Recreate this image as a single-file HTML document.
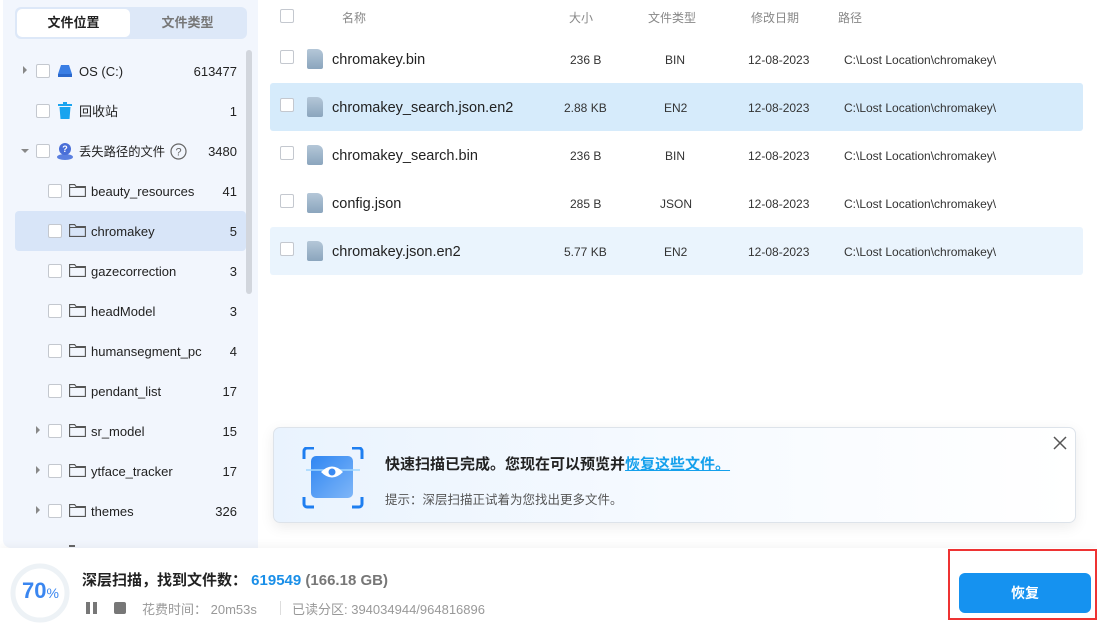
<!DOCTYPE html>
<html><head><meta charset="utf-8">
<style>
*{margin:0;padding:0;box-sizing:border-box}
body{width:1097px;height:624px;overflow:hidden;background:#fff;font-family:"Liberation Sans","Noto Sans CJK SC",sans-serif;color:#222;position:relative}
.abs{position:absolute}
#left{left:3px;top:0;width:255px;height:548px;background:#f2f6fd;border-radius:0 0 0 8px}
.tabs{left:15px;top:7px;width:232px;height:32px;background:#dde8f8;border-radius:6px}
.tab1{left:2px;top:2px;width:113px;height:28px;background:#fff;border-radius:5px;font-weight:bold;font-size:13px;text-align:center;line-height:28px}
.tab2{left:115px;top:2px;width:115px;height:28px;font-weight:bold;font-size:13px;text-align:center;line-height:28px;color:#777}
.row{position:absolute;left:0;width:255px;height:40px;font-size:13px}
.cb{position:absolute;width:14px;height:14px;border:1px solid #c4c8cf;border-radius:2px;background:#fff;top:13px}
.arr{position:absolute;top:15px;width:0;height:0;border-top:4px solid transparent;border-bottom:4px solid transparent;border-left:4px solid #888}
.arrd{position:absolute;top:18px;width:0;height:0;border-left:4px solid transparent;border-right:4px solid transparent;border-top:4px solid #888}
.lbl{position:absolute;top:1px;line-height:40px}
.cnt{position:absolute;right:18px;top:1px;line-height:40px}
.fold{position:absolute;top:12px;width:17px;height:14px}
.hdr{font-size:12px;color:#888;top:9px}
.frow{position:absolute;left:270px;width:813px;height:48px;font-size:14px;border-radius:3px}
.frow .cb{left:10px;top:15px}
.fi{position:absolute;left:37px;top:14px;width:16px;height:20px;background:linear-gradient(180deg,#b4c7d8,#8ba5bd);border-radius:2px 6px 2px 2px}
.fn{position:absolute;left:62px;top:1px;line-height:48px;font-size:14.5px}
.c{position:absolute;top:1px;line-height:48px;font-size:12px;color:#333}
</style></head><body>
<div id="left" class="abs"></div>
<div class="abs tabs"><div class="abs tab1">文件位置</div><div class="abs tab2">文件类型</div></div>
<div class="abs" style="left:246px;top:50px;width:6px;height:244px;background:#d2d6dd;border-radius:3px"></div>
<div class="abs" style="left:15px;top:211px;width:231px;height:40px;background:#d8e5f8;border-radius:4px"></div>
<div class="abs" style="left:69px;top:545px;width:6px;height:2px;background:#666"></div>

<div class="row" style="top:51px"><div class="arr" style="left:23px"></div><div class="cb" style="left:36px"></div>
<svg class="abs" style="left:57px;top:12px" width="16" height="16"><path d="M4 2h8l3 9v3H1v-3z" fill="#3a7ee4"/><rect x="1" y="11" width="14" height="3" fill="#2a68cc"/></svg>
<div class="lbl" style="left:79px">OS (C:)</div><div class="cnt">613477</div></div>

<div class="row" style="top:91px"><div class="cb" style="left:36px"></div>
<svg class="abs" style="left:57px;top:11px" width="16" height="18"><rect x="1" y="2" width="14" height="2" fill="#1aa4ef"/><rect x="6" y="0" width="4" height="2" fill="#1aa4ef"/><path d="M2.5 5h11l-1 12h-9z" fill="#1aa4ef"/></svg>
<div class="lbl" style="left:79px">回收站</div><div class="cnt">1</div></div>

<div class="row" style="top:131px"><div class="arrd" style="left:21px"></div><div class="cb" style="left:36px"></div>
<svg class="abs" style="left:56px;top:11px" width="18" height="18"><ellipse cx="9" cy="15" rx="8" ry="3" fill="#5a7fe0"/><circle cx="9" cy="7" r="6" fill="#4a6fd8"/><path d="M9 13l-3-2h6z" fill="#4a6fd8"/><text x="9" y="10" font-size="9" fill="#fff" text-anchor="middle" font-weight="bold" font-family="Liberation Sans">?</text></svg>
<div class="lbl" style="left:79px;font-size:12.3px">丢失路径的文件</div>
<svg class="abs" style="left:170px;top:12px" width="17" height="17"><circle cx="8.5" cy="8.5" r="7.5" fill="none" stroke="#666" stroke-width="1.2"/><text x="8.5" y="12.5" font-size="11" fill="#666" text-anchor="middle" font-family="Liberation Sans">?</text></svg>
<div class="cnt">3480</div></div>

<div class="row" style="top:171px"><div class="cb" style="left:48px"></div><svg class="fold" style="left:69px"><path d="M0.6 1.6h5l1.5 2h9.3v9.8H0.6z M0.6 4.5h16.3" fill="none" stroke="#555" stroke-width="1.1"/></svg><div class="lbl" style="left:91px">beauty_resources</div><div class="cnt">41</div></div>
<div class="row" style="top:211px"><div class="cb" style="left:48px"></div><svg class="fold" style="left:69px"><path d="M0.6 1.6h5l1.5 2h9.3v9.8H0.6z M0.6 4.5h16.3" fill="none" stroke="#555" stroke-width="1.1"/></svg><div class="lbl" style="left:91px">chromakey</div><div class="cnt">5</div></div>
<div class="row" style="top:251px"><div class="cb" style="left:48px"></div><svg class="fold" style="left:69px"><path d="M0.6 1.6h5l1.5 2h9.3v9.8H0.6z M0.6 4.5h16.3" fill="none" stroke="#555" stroke-width="1.1"/></svg><div class="lbl" style="left:91px">gazecorrection</div><div class="cnt">3</div></div>
<div class="row" style="top:291px"><div class="cb" style="left:48px"></div><svg class="fold" style="left:69px"><path d="M0.6 1.6h5l1.5 2h9.3v9.8H0.6z M0.6 4.5h16.3" fill="none" stroke="#555" stroke-width="1.1"/></svg><div class="lbl" style="left:91px">headModel</div><div class="cnt">3</div></div>
<div class="row" style="top:331px"><div class="cb" style="left:48px"></div><svg class="fold" style="left:69px"><path d="M0.6 1.6h5l1.5 2h9.3v9.8H0.6z M0.6 4.5h16.3" fill="none" stroke="#555" stroke-width="1.1"/></svg><div class="lbl" style="left:91px">humansegment_pc</div><div class="cnt">4</div></div>
<div class="row" style="top:371px"><div class="cb" style="left:48px"></div><svg class="fold" style="left:69px"><path d="M0.6 1.6h5l1.5 2h9.3v9.8H0.6z M0.6 4.5h16.3" fill="none" stroke="#555" stroke-width="1.1"/></svg><div class="lbl" style="left:91px">pendant_list</div><div class="cnt">17</div></div>
<div class="row" style="top:411px"><div class="arr" style="left:36px"></div><div class="cb" style="left:48px"></div><svg class="fold" style="left:69px"><path d="M0.6 1.6h5l1.5 2h9.3v9.8H0.6z M0.6 4.5h16.3" fill="none" stroke="#555" stroke-width="1.1"/></svg><div class="lbl" style="left:91px">sr_model</div><div class="cnt">15</div></div>
<div class="row" style="top:451px"><div class="arr" style="left:36px"></div><div class="cb" style="left:48px"></div><svg class="fold" style="left:69px"><path d="M0.6 1.6h5l1.5 2h9.3v9.8H0.6z M0.6 4.5h16.3" fill="none" stroke="#555" stroke-width="1.1"/></svg><div class="lbl" style="left:91px">ytface_tracker</div><div class="cnt">17</div></div>
<div class="row" style="top:491px"><div class="arr" style="left:36px"></div><div class="cb" style="left:48px"></div><svg class="fold" style="left:69px"><path d="M0.6 1.6h5l1.5 2h9.3v9.8H0.6z M0.6 4.5h16.3" fill="none" stroke="#555" stroke-width="1.1"/></svg><div class="lbl" style="left:91px">themes</div><div class="cnt">326</div></div>

<div class="cb" style="left:280px;top:9px"></div>
<div class="abs hdr" style="left:342px">名称</div>
<div class="abs hdr" style="left:569px">大小</div>
<div class="abs hdr" style="left:648px">文件类型</div>
<div class="abs hdr" style="left:751px">修改日期</div>
<div class="abs hdr" style="left:838px">路径</div>

<div class="frow" style="top:35px"><div class="cb"></div><div class="fi"></div><div class="fn">chromakey.bin</div><div class="c" style="left:300px">236 B</div><div class="c" style="left:395px">BIN</div><div class="c" style="left:478px">12-08-2023</div><div class="c" style="left:574px">C:\Lost Location\chromakey\</div></div>
<div class="frow" style="top:83px;background:#d6ebfb"><div class="cb"></div><div class="fi"></div><div class="fn">chromakey_search.json.en2</div><div class="c" style="left:294px">2.88 KB</div><div class="c" style="left:394px">EN2</div><div class="c" style="left:478px">12-08-2023</div><div class="c" style="left:574px">C:\Lost Location\chromakey\</div></div>
<div class="frow" style="top:131px"><div class="cb"></div><div class="fi"></div><div class="fn">chromakey_search.bin</div><div class="c" style="left:300px">236 B</div><div class="c" style="left:395px">BIN</div><div class="c" style="left:478px">12-08-2023</div><div class="c" style="left:574px">C:\Lost Location\chromakey\</div></div>
<div class="frow" style="top:179px"><div class="cb"></div><div class="fi"></div><div class="fn">config.json</div><div class="c" style="left:300px">285 B</div><div class="c" style="left:390px">JSON</div><div class="c" style="left:478px">12-08-2023</div><div class="c" style="left:574px">C:\Lost Location\chromakey\</div></div>
<div class="frow" style="top:227px;background:#eaf4fd"><div class="cb"></div><div class="fi"></div><div class="fn">chromakey.json.en2</div><div class="c" style="left:294px">5.77 KB</div><div class="c" style="left:394px">EN2</div><div class="c" style="left:478px">12-08-2023</div><div class="c" style="left:574px">C:\Lost Location\chromakey\</div></div>

<div class="abs" style="left:273px;top:427px;width:803px;height:96px;border:1px solid #dde3ea;border-radius:7px;background:linear-gradient(90deg,#e9f3fe,#f6faff 50%,#fff);box-shadow:0 4px 14px rgba(0,0,0,0.08)"></div>
<svg class="abs" style="left:302px;top:447px" width="62" height="62">
<path d="M2 12V4a3 3 0 0 1 3-3h7M50 1h7a3 3 0 0 1 3 3v8M60 50v7a3 3 0 0 1-3 3h-7M12 60H5a3 3 0 0 1-3-3v-7" fill="none" stroke="#1e7ef0" stroke-width="3"/>
<defs><linearGradient id="g" x1="0" y1="0" x2="1" y2="1"><stop offset="0" stop-color="#2f86f2"/><stop offset="1" stop-color="#7fb6f8"/></linearGradient></defs>
<rect x="9" y="9" width="42" height="42" rx="5" fill="url(#g)"/>
<line x1="4" y1="23" x2="58" y2="23" stroke="#9fd6ff" stroke-width="1.5"/>
<path d="M19 25q11-11 22 0q-11 11-22 0z" fill="#fff"/><circle cx="30" cy="25" r="3.5" fill="#3a8af2"/>
</svg>
<div class="abs" style="left:385px;top:453px;font-size:15px;font-weight:bold">快速扫描已完成。您现在可以预览并<span style="color:#14a0ec;text-decoration:underline">恢复这些文件。</span></div>
<div class="abs" style="left:385px;top:489px;font-size:12.5px;color:#555">提示：深层扫描正试着为您找出更多文件。</div>
<svg class="abs" style="left:1052px;top:435px" width="16" height="16"><path d="M2 2l12 12M14 2L2 14" stroke="#555" stroke-width="1.5"/></svg>

<div class="abs" style="left:0;top:548px;width:1097px;height:76px;background:#fff;box-shadow:0 -3px 8px rgba(0,0,0,0.04)"></div>
<svg class="abs" style="left:9px;top:562px" width="62" height="62"><circle cx="31" cy="31" r="27" fill="none" stroke="#edf2f6" stroke-width="5"/></svg>
<div class="abs" style="left:22px;top:578px;font-size:22px;color:#3a86f0;font-weight:bold">70<span style="font-size:14px;font-weight:normal">%</span></div>
<div class="abs" style="left:82px;top:569px;font-size:15px;font-weight:bold">深层扫描，找到文件数： <span style="color:#1a8fe8">619549</span> <span style="color:#777">(166.18 GB)</span></div>
<div class="abs" style="left:86px;top:602px;width:4px;height:12px;background:#777"></div>
<div class="abs" style="left:93px;top:602px;width:4px;height:12px;background:#777"></div>
<div class="abs" style="left:114px;top:602px;width:12px;height:12px;background:#777;border-radius:2px"></div>
<div class="abs" style="left:142px;top:599px;font-size:13px;color:#999">花费时间： 20m53s</div>
<div class="abs" style="left:280px;top:601px;width:1px;height:14px;background:#ddd"></div>
<div class="abs" style="left:292px;top:599px;font-size:13px;color:#999">已读分区: 394034944/964816896</div>
<div class="abs" style="left:948px;top:549px;width:149px;height:71px;border:2px solid #ee3333"></div>
<div class="abs" style="left:959px;top:573px;width:132px;height:40px;background:#1592f0;border-radius:6px;color:#fff;font-weight:bold;font-size:14px;text-align:center;line-height:40px">恢复</div>
</body></html>
